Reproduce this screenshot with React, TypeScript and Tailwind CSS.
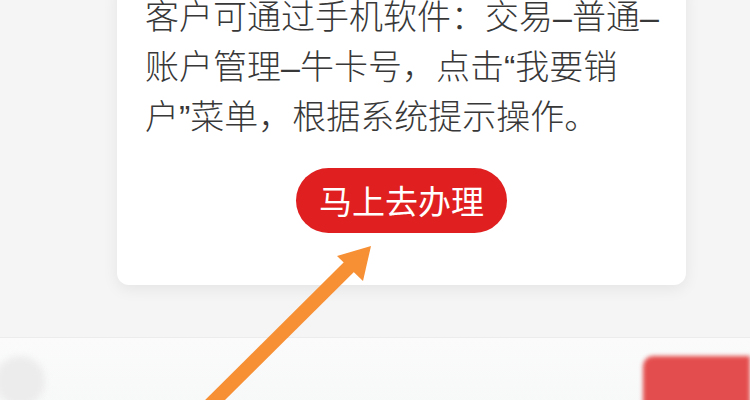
export default function App() {
  const lines = [
    '客户可通过手机软件：交易–普通–',
    '账户管理–牛卡号，点击“我要销',
    '户”菜单，根据系统提示操作。',
  ];

  return (
    <div
      className="relative w-[750px] h-[400px] overflow-hidden bg-[#f5f5f5]"
      style={{ fontFamily: '"Noto Sans CJK SC", "Noto Sans", sans-serif' }}
    >
      {/* Card */}
      <div className="ml-[117px] w-[569px] -mt-[20px] pt-[12px] pb-[52px] rounded-[12px] bg-white shadow-[0_4px_16px_rgba(0,0,0,0.07)] flex flex-col">
        <div
          className="px-[28px] text-[34px] leading-[50px] font-light text-[#383838]"
          style={{ fontFamily: '"Liberation Sans", "Noto Sans CJK SC", sans-serif' }}
        >
          {lines.map((line) => (
            <div key={line} className="whitespace-nowrap">
              {line}
            </div>
          ))}
        </div>
        <div className="mt-[26px] flex justify-center">
          <button className="h-[65px] px-[23px] rounded-full bg-[#df1f20] text-white text-[33px] leading-none">
            马上去办理
          </button>
        </div>
      </div>

      {/* Bottom bar */}
      <div className="mt-[52px] h-[70px] border-t border-[#ececec] bg-gradient-to-b from-[#fbfbfb] to-[#f7f8f8] flex items-start justify-between pt-[18px]">
        <div className="-ml-[5px] w-[50px] h-[50px] rounded-full bg-[#ececec] blur-[3px]" />
        <div className="w-[107px] h-[50px] rounded-tl-[10px] bg-[#e23b3b] blur-[2px] opacity-90" />
      </div>

      {/* Arrow overlay */}
      <svg
        className="absolute inset-0 pointer-events-none"
        width="750"
        height="400"
        viewBox="0 0 750 400"
      >
        <line x1="205" y1="410" x2="350" y2="266" stroke="#f78f34" strokeWidth="14" />
        <polygon points="371,246 337,256 363,281" fill="#f78f34" />
      </svg>
    </div>
  );
}
